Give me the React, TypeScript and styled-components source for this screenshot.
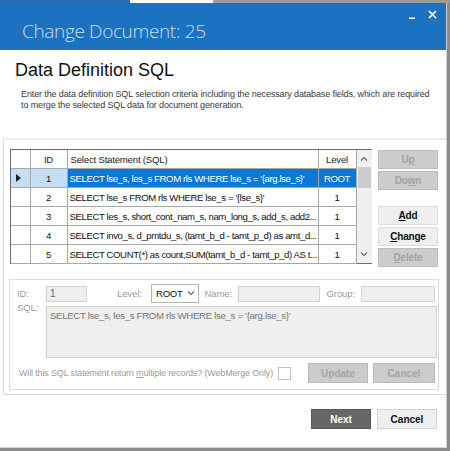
import * as React from 'react';
import styled, { createGlobalStyle } from 'styled-components';

const GlobalStyle = createGlobalStyle`
  html, body {
    margin: 0;
    padding: 0;
    background: #8c8c8c;
    font-family: 'Liberation Sans', Arial, sans-serif;
  }
`;

const rows = [
  { id: 1, sql: "SELECT lse_s, les_s FROM rls WHERE lse_s = '{arg.lse_s}'", level: 'ROOT' },
  { id: 2, sql: "SELECT lse_s FROM rls WHERE lse_s = '{lse_s}'", level: '1' },
  { id: 3, sql: 'SELECT les_s, short_cont_nam_s, nam_long_s, add_s, add2...', level: '1' },
  { id: 4, sql: 'SELECT invo_s, d_pmtdu_s, (tamt_b_d - tamt_p_d) as amt_d...', level: '1' },
  { id: 5, sql: 'SELECT COUNT(*) as count,SUM(tamt_b_d - tamt_p_d) AS t...', level: '1' },
];

const Screen = styled.div`
  width: 450px;
  height: 451px;
  overflow: hidden;
  background: #8c8c8c;
`;

const TopStrip = styled.div`
  height: 3px;
  display: flex;
`;

const StripPart = styled.div<{ $w: number; $c: string }>`
  width: ${p => p.$w}px;
  background: ${p => p.$c};
`;

const Window = styled.div`
  width: 446px;
  height: 444px;
  border-right: 1px solid #cfcfcf;
  border-bottom: 1px solid #d6d6d6;
  background: #fff;
  display: flex;
  flex-direction: column;
`;

const TitleBar = styled.div`
  height: 47px;
  background: #1b72c0;
  display: flex;
  align-items: flex-start;
  justify-content: space-between;
  flex-shrink: 0;
`;

const Title = styled.div`
  font-family: 'Open Sans', 'Noto Sans', sans-serif;
  font-weight: 300;
  font-size: 19px;
  color: #c9def2;
  margin: 15px 0 0 22px;
  letter-spacing: -0.35px;
`;

const WinControls = styled.div`
  display: flex;
  align-items: center;
  gap: 12px;
  margin: 7px 9px 0 0;
`;

const Intro = styled.div`
  height: 88px;
  padding: 10px 0 0 15px;
  box-sizing: border-box;
  flex-shrink: 0;
`;

const Heading = styled.h1`
  margin: 0;
  font-size: 18px;
  font-weight: normal;
  color: #111;
`;

const Description = styled.p`
  margin: 8px 0 0 6px;
  font-size: 9px;
  line-height: 11px;
  color: #3a3a3a;
  letter-spacing: -0.12px;
`;

const Panel = styled.div`
  margin-left: 3px;
  height: 257px;
  border-top: 2px solid #ececec;
  border-left: 1px solid #dcdcdc;
  border-bottom: 1px solid #dcdcdc;
  box-sizing: border-box;
  padding: 9px 0 0 6px;
  flex-shrink: 0;
`;

const TopSection = styled.div`
  display: flex;
  gap: 6px;
`;

const Grid = styled.div`
  width: 362px;
  height: 115px;
  border: 1px solid #6a6a6a;
  box-sizing: border-box;
  display: flex;
  background: #fff;
  flex-shrink: 0;
`;

const Table = styled.table`
  border-collapse: collapse;
  table-layout: fixed;
  width: 345px;
  flex-shrink: 0;
  font-size: 9.6px;
  letter-spacing: -0.4px;
  color: #111;
`;

const Th = styled.th<{ $left?: boolean }>`
  height: 18px;
  font-weight: normal;
  letter-spacing: -0.2px;
  text-align: ${p => (p.$left ? 'left' : 'center')};
  padding: 0 0 0 ${p => (p.$left ? 3 : 0)}px;
  border-right: 1px solid #a8a8a8;
  border-bottom: 1px solid #a8a8a8;
  color: #222;
  background: #fff;
`;

const Td = styled.td<{ $sel?: 'light' | 'dark'; $left?: boolean }>`
  height: 18px;
  padding: 0 0 0 ${p => (p.$left ? 2 : 0)}px;
  text-align: ${p => (p.$left ? 'left' : 'center')};
  white-space: nowrap;
  overflow: hidden;
  border-right: 1px solid #a8a8a8;
  border-bottom: 1px solid #a8a8a8;
  background: ${p => (p.$sel === 'dark' ? '#0a78d6' : p.$sel === 'light' ? '#c6def5' : '#fff')};
  color: ${p => (p.$sel === 'dark' ? '#fff' : '#111')};
`;

const Arrow = styled.span`
  display: inline-block;
  width: 0;
  height: 0;
  border-top: 4px solid transparent;
  border-bottom: 4px solid transparent;
  border-left: 5px solid #222;
  margin-left: -4px;
`;

const Scrollbar = styled.div`
  width: 15px;
  flex-shrink: 0;
  background: #f0f0f0;
  display: flex;
  flex-direction: column;
  align-items: center;
`;

const ScrollArrow = styled.div`
  height: 17px;
  display: flex;
  align-items: center;
  justify-content: center;
`;

const Thumb = styled.div`
  width: 13px;
  height: 21px;
  background: #cdcdcd;
`;

const ScrollFill = styled.div`
  flex: 1;
`;

const SideButtons = styled.div`
  width: 60px;
  display: flex;
  flex-direction: column;
  gap: 2px;
  padding-top: 1px;
`;

const SideButton = styled.button<{ $disabled?: boolean; $gapTop?: number }>`
  height: 19px;
  margin-top: ${p => p.$gapTop || 0}px;
  padding: 0;
  font-family: 'Liberation Sans', Arial, sans-serif;
  font-size: 10px;
  font-weight: bold;
  letter-spacing: -0.2px;
  border: 1px solid ${p => (p.$disabled ? '#bdbdbd' : '#dedede')};
  background: ${p => (p.$disabled ? '#cccccc' : '#efefef')};
  color: ${p => (p.$disabled ? '#a3a3a3' : '#111')};
`;

const GroupBox = styled.div`
  margin: 12px 0 0 -1px;
  width: 430px;
  height: 111px;
  border: 1px solid #dcdcdc;
  box-sizing: border-box;
  padding: 5px 0 0 7px;
  display: flex;
  flex-direction: column;
`;

const FieldRow = styled.div`
  display: flex;
  align-items: center;
  height: 17px;
`;

const Label = styled.span<{ $w: number; $right?: boolean; $top?: boolean }>`
  width: ${p => p.$w}px;
  font-size: 9.5px;
  color: #9a9a9a;
  text-align: ${p => (p.$right ? 'right' : 'left')};
  flex-shrink: 0;
  letter-spacing: -0.1px;
  margin-top: ${p => (p.$top ? -4 : 0)}px;
`;

const TextBox = styled.div<{ $w: number; $ml?: number }>`
  width: ${p => p.$w}px;
  height: 16px;
  margin-left: ${p => p.$ml || 0}px;
  background: #efefef;
  border: 1px solid #d2d2d2;
  box-sizing: border-box;
  font-size: 10px;
  color: #666;
  padding: 1px 0 0 3px;
  flex-shrink: 0;
`;

const Select = styled.div`
  width: 48px;
  height: 19px;
  margin-left: 9px;
  border: 1px solid #b4b4b4;
  box-sizing: border-box;
  background: #fff;
  display: flex;
  align-items: center;
  justify-content: space-between;
  padding: 0 3px 0 4px;
  font-size: 9.5px;
  letter-spacing: -0.2px;
  color: #111;
  flex-shrink: 0;
`;

const SqlRow = styled.div`
  display: flex;
  margin-top: 4px;
`;

const SqlArea = styled.div`
  width: 391px;
  height: 52px;
  background: #efefef;
  border: 1px solid #d2d2d2;
  box-sizing: border-box;
  padding: 3px 0 0 3px;
  font-size: 9.6px;
  letter-spacing: -0.3px;
  color: #777;
`;

const BottomRow = styled.div`
  display: flex;
  align-items: center;
  margin-top: 5px;
  height: 20px;
`;

const Question = styled.span`
  font-size: 9px;
  color: #9a9a9a;
  margin-left: 2px;
  letter-spacing: -0.15px;
  width: 259px;
  flex-shrink: 0;
`;

const CheckBox = styled.span`
  width: 11px;
  height: 11px;
  border: 1px solid #c4c4c4;
  background: #fff;
`;

const FormButton = styled.button<{ $w: number; $ml: number }>`
  width: ${p => p.$w}px;
  height: 20px;
  margin-left: ${p => p.$ml}px;
  padding: 0;
  font-family: 'Liberation Sans', Arial, sans-serif;
  font-size: 10px;
  font-weight: bold;
  background: #cccccc;
  border: 1px solid #b9b9b9;
  color: #a5a5a5;
`;

const Footer = styled.div`
  flex: 1;
  display: flex;
  justify-content: flex-end;
  align-items: flex-start;
  gap: 6px;
  padding: 14px 9px 0 0;
`;

const FooterButton = styled.button<{ $primary?: boolean }>`
  width: 60px;
  height: 20px;
  padding: 0;
  font-family: 'Liberation Sans', Arial, sans-serif;
  font-size: 10px;
  font-weight: bold;
  background: ${p => (p.$primary ? '#676767' : '#efefef')};
  border: 1px solid ${p => (p.$primary ? '#5a5a5a' : '#d3d3d3')};
  color: ${p => (p.$primary ? '#fff' : '#111')};
`;

const Chevron = ({ up }: { up?: boolean }) => (
  <svg width="8" height="5" viewBox="0 0 8 5">
    <path d={up ? 'M1 4.5 L4 1.5 L7 4.5' : 'M1 0.5 L4 3.5 L7 0.5'} stroke="#666" strokeWidth="1.1" fill="none" />
  </svg>
);

const MinimizeIcon = () => (
  <svg width="8" height="8" viewBox="0 0 8 8">
    <rect x="1" y="6.5" width="6" height="1.5" fill="#fff" />
  </svg>
);

const CloseIcon = () => (
  <svg width="9" height="9" viewBox="0 0 9 9">
    <path d="M1 1 L8 8 M8 1 L1 8" stroke="#fff" strokeWidth="1.7" />
  </svg>
);

const App = () => (
  <Screen>
    <GlobalStyle />
    <TopStrip>
      <StripPart $w={130} $c="#2a6fb4" />
      <StripPart $w={83} $c="#fff" />
      <StripPart $w={237} $c="#9b9b9b" />
    </TopStrip>
    <Window>
      <TitleBar>
        <Title>Change Document: 25</Title>
        <WinControls>
          <MinimizeIcon />
          <CloseIcon />
        </WinControls>
      </TitleBar>
      <Intro>
        <Heading>Data Definition SQL</Heading>
        <Description>
          Enter the data definition SQL selection criteria including the necessary database fields, which are required
          <br />
          to merge the selected SQL data for document generation.
        </Description>
      </Intro>
      <Panel>
        <TopSection>
          <Grid>
            <Table>
              <colgroup>
                <col style={{ width: 19 }} />
                <col style={{ width: 37 }} />
                <col style={{ width: 251 }} />
                <col style={{ width: 38 }} />
              </colgroup>
              <thead>
                <tr>
                  <Th />
                  <Th>ID</Th>
                  <Th $left>Select Statement (SQL)</Th>
                  <Th>Level</Th>
                </tr>
              </thead>
              <tbody>
                {rows.map((r, i) => {
                  const sel = i === 0;
                  return (
                    <tr key={r.id}>
                      <Td $sel={sel ? 'light' : undefined}>{sel && <Arrow />}</Td>
                      <Td $sel={sel ? 'light' : undefined}>{r.id}</Td>
                      <Td $sel={sel ? 'dark' : undefined} $left>{r.sql}</Td>
                      <Td $sel={sel ? 'dark' : undefined}>{r.level}</Td>
                    </tr>
                  );
                })}
              </tbody>
            </Table>
            <Scrollbar>
              <ScrollArrow><Chevron up /></ScrollArrow>
              <Thumb />
              <ScrollFill />
              <ScrollArrow><Chevron /></ScrollArrow>
            </Scrollbar>
          </Grid>
          <SideButtons>
            <SideButton $disabled>U<u>p</u></SideButton>
            <SideButton $disabled>Do<u>w</u>n</SideButton>
            <SideButton $gapTop={14}><u>A</u>dd</SideButton>
            <SideButton><u>C</u>hange</SideButton>
            <SideButton $disabled><u>D</u>elete</SideButton>
          </SideButtons>
        </TopSection>
        <GroupBox>
          <FieldRow>
            <Label $w={29}>ID:</Label>
            <TextBox $w={41}>1</TextBox>
            <Label $w={55} $right>Level:</Label>
            <Select>
              <span>ROOT</span>
              <Chevron />
            </Select>
            <Label $w={33} $right>Name:</Label>
            <TextBox $w={82} $ml={6}></TextBox>
            <Label $w={35} $right>Group:</Label>
            <TextBox $w={74} $ml={6}></TextBox>
          </FieldRow>
          <SqlRow>
            <Label $w={29} $top>SQL:</Label>
            <SqlArea>SELECT lse_s, les_s FROM rls WHERE lse_s = '{'{'}arg.lse_s{'}'}'</SqlArea>
          </SqlRow>
          <BottomRow>
            <Question>
              Will this SQL statement return <u>m</u>ultiple records? (WebMerge Only)
            </Question>
            <CheckBox />
            <FormButton $w={60} $ml={17}>Update</FormButton>
            <FormButton $w={62} $ml={5}>Cancel</FormButton>
          </BottomRow>
        </GroupBox>
      </Panel>
      <Footer>
        <FooterButton $primary>Next</FooterButton>
        <FooterButton>Cancel</FooterButton>
      </Footer>
    </Window>
  </Screen>
);

export default App;
